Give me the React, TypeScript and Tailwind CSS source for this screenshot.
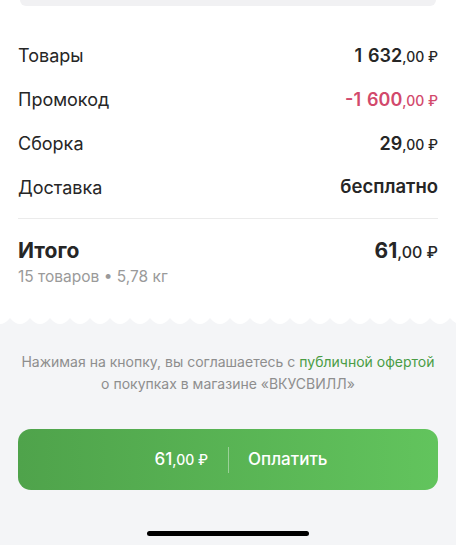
import React from "react";

function Num({ value }: { value: string }) {
  const parts = value.split(" ");
  return (
    <>
      {parts.map((p, i) => (
        <React.Fragment key={i}>
          {i > 0 && <span className="inline-block w-[6px]" />}
          {p}
        </React.Fragment>
      ))}
    </>
  );
}

function Price({ main, cents, className = "" }: { main: string; cents: string; className?: string }) {
  return (
    <span className={`whitespace-nowrap ${className}`}>
      <span className="text-[18px] font-semibold">
        <Num value={main} />
      </span>
      <span className="text-[14px] font-medium">,{cents} ₽</span>
    </span>
  );
}

function Row({ label, children }: { label: string; children: React.ReactNode }) {
  return (
    <div className="flex h-[44px] items-center justify-between">
      <span className="text-[18px] text-[#262626]">{label}</span>
      {children}
    </div>
  );
}

export default function App() {
  return (
    <div
      className="relative w-[456px] h-[545px] overflow-hidden bg-white text-[#262626]"
      style={{ fontFamily: "Inter, 'Noto Sans', sans-serif" }}
    >
      <div className="mx-[20px] h-[6px] rounded-b-[18px] bg-[#f1f1f3]" />
      <div className="px-[18px] pt-[27px]">
        <Row label="Товары">
          <Price main="1 632" cents="00" />
        </Row>
        <Row label="Промокод">
          <Price main="-1 600" cents="00" className="text-[#d2496c]" />
        </Row>
        <Row label="Сборка">
          <Price main="29" cents="00" />
        </Row>
        <Row label="Доставка">
          <span className="text-[18.5px] font-semibold">бесплатно</span>
        </Row>
        <div className="mt-[9px] h-px bg-[#ebebeb]" />
        <div className="mt-[19px] flex items-start justify-between">
          <div>
            <div className="text-[21px] leading-[26px] font-bold">Итого</div>
            <div className="mt-[3px] text-[15.5px] leading-[20px] text-[#9a9a9a]">15 товаров • 5,78 кг</div>
          </div>
          <div className="leading-[26px]">
            <span className="text-[21px] font-bold">61</span>
            <span className="text-[16px] font-medium">,00 ₽</span>
          </div>
        </div>
      </div>
      <div className="absolute left-0 right-0 top-[316px] bottom-0 flex flex-col">
        <svg width="456" height="10" viewBox="0 0 456 10" className="block">
          <path
            d={
              "M0 10 L0 8 " +
              Array.from({ length: 23 })
                .map((_, i) => {
                  const x = i * 20;
                  return `Q${x + 5} 8 ${x + 10} 2 Q${x + 15} 8 ${x + 20} 8`;
                })
                .join(" ") +
              " L460 10 Z"
            }
            fill="#f4f5f7"
          />
        </svg>
        <div className="flex-1 bg-[#f4f5f7] flex flex-col items-center">
          <div className="mt-[25px] text-center text-[14px] leading-[22px] text-[#8e8e8e]">
            Нажимая на кнопку, вы соглашаетесь с <span className="text-[#4a9c45]">публичной офертой</span>
            <br />о покупках в магазине «ВКУСВИЛЛ»
          </div>
          <div className="mt-[34px] flex h-[61px] w-[420px] items-center rounded-[13px] bg-gradient-to-r from-[#4fa34b] to-[#62c45d] text-white">
            <div className="flex flex-1 justify-end pr-[20px]">
              <span className="text-[17px] font-medium">61</span>
              <span className="text-[14px] font-medium leading-[26px]">,00 ₽</span>
            </div>
            <span className="h-[26px] w-px bg-white/40" />
            <div className="flex flex-1 justify-start pl-[19px]">
              <span className="text-[17px] font-medium">Оплатить</span>
            </div>
          </div>
          <div className="mt-[41px] h-[5px] w-[162px] rounded-full bg-black" />
        </div>
      </div>
    </div>
  );
}
